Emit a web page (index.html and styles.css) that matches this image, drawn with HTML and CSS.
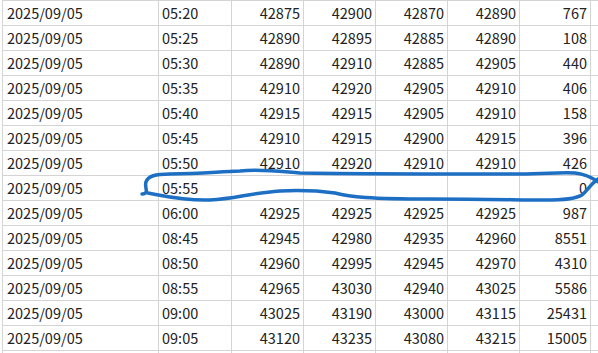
FILE: index.html
```html
<!DOCTYPE html>
<html lang="ja">
  <head>
    <meta charset="UTF-8" />
    <meta name="viewport" content="width=device-width, initial-scale=1.0" />
    <title>5分足データ</title>
    <link rel="stylesheet" href="styles.css">
  </head>
  <body>
    <div class="page">
      <div class="sheet">
        <div class="row"><div class="cell">2025/09/05</div><div class="cell">05:20</div><div class="cell num">42875</div><div class="cell num">42900</div><div class="cell num">42870</div><div class="cell num">42890</div><div class="cell num">767</div><div class="cell"></div></div>
        <div class="row"><div class="cell">2025/09/05</div><div class="cell">05:25</div><div class="cell num">42890</div><div class="cell num">42895</div><div class="cell num">42885</div><div class="cell num">42890</div><div class="cell num">108</div><div class="cell"></div></div>
        <div class="row"><div class="cell">2025/09/05</div><div class="cell">05:30</div><div class="cell num">42890</div><div class="cell num">42910</div><div class="cell num">42885</div><div class="cell num">42905</div><div class="cell num">440</div><div class="cell"></div></div>
        <div class="row"><div class="cell">2025/09/05</div><div class="cell">05:35</div><div class="cell num">42910</div><div class="cell num">42920</div><div class="cell num">42905</div><div class="cell num">42910</div><div class="cell num">406</div><div class="cell"></div></div>
        <div class="row"><div class="cell">2025/09/05</div><div class="cell">05:40</div><div class="cell num">42915</div><div class="cell num">42915</div><div class="cell num">42905</div><div class="cell num">42910</div><div class="cell num">158</div><div class="cell"></div></div>
        <div class="row"><div class="cell">2025/09/05</div><div class="cell">05:45</div><div class="cell num">42910</div><div class="cell num">42915</div><div class="cell num">42900</div><div class="cell num">42915</div><div class="cell num">396</div><div class="cell"></div></div>
        <div class="row"><div class="cell">2025/09/05</div><div class="cell">05:50</div><div class="cell num">42910</div><div class="cell num">42920</div><div class="cell num">42910</div><div class="cell num">42910</div><div class="cell num">426</div><div class="cell"></div></div>
        <div class="row"><div class="cell">2025/09/05</div><div class="cell">05:55</div><div class="cell num"></div><div class="cell num"></div><div class="cell num"></div><div class="cell num"></div><div class="cell num">0</div><div class="cell"></div></div>
        <div class="row"><div class="cell">2025/09/05</div><div class="cell">06:00</div><div class="cell num">42925</div><div class="cell num">42925</div><div class="cell num">42925</div><div class="cell num">42925</div><div class="cell num">987</div><div class="cell"></div></div>
        <div class="row"><div class="cell">2025/09/05</div><div class="cell">08:45</div><div class="cell num">42945</div><div class="cell num">42980</div><div class="cell num">42935</div><div class="cell num">42960</div><div class="cell num">8551</div><div class="cell"></div></div>
        <div class="row"><div class="cell">2025/09/05</div><div class="cell">08:50</div><div class="cell num">42960</div><div class="cell num">42995</div><div class="cell num">42945</div><div class="cell num">42970</div><div class="cell num">4310</div><div class="cell"></div></div>
        <div class="row"><div class="cell">2025/09/05</div><div class="cell">08:55</div><div class="cell num">42965</div><div class="cell num">43030</div><div class="cell num">42940</div><div class="cell num">43025</div><div class="cell num">5586</div><div class="cell"></div></div>
        <div class="row"><div class="cell">2025/09/05</div><div class="cell">09:00</div><div class="cell num">43025</div><div class="cell num">43190</div><div class="cell num">43000</div><div class="cell num">43115</div><div class="cell num">25431</div><div class="cell"></div></div>
        <div class="row"><div class="cell">2025/09/05</div><div class="cell">09:05</div><div class="cell num">43120</div><div class="cell num">43235</div><div class="cell num">43080</div><div class="cell num">43215</div><div class="cell num">15005</div><div class="cell"></div></div>
        <div class="row"><div class="cell"></div><div class="cell"></div><div class="cell"></div><div class="cell"></div><div class="cell"></div><div class="cell"></div><div class="cell"></div><div class="cell"></div></div>
      </div>

      <!-- hand-drawn marker around the empty 05:55 row -->
      <svg class="ink" width="598" height="353" viewBox="0 0 598 353">
        <path d="M142,194 C150,194 144,187 146,182 C148,176 155,174 170,174 C200,174 215,172 240,171 C260,169 275,171 300,173 C360,174 440,174 520,174 C545,174 560,172 575,173 C585,174 593,178 600,183" />
        <path d="M148,193 C165,196 185,201 210,200 C235,199 250,193 280,191 C300,190 320,191 335,193 C350,197 370,199 430,199 C490,199 520,200 545,200 C565,200 575,199 582,195 C588,190 592,182 600,178" />
      </svg>
    </div>
  </body>
</html>
```

FILE: styles.css
```css
body {
  margin: 0;
  background-color: #fff;
  font-family: "Noto Sans CJK JP", "Liberation Sans", sans-serif;
  font-size: 14.5px;
  color: #222;
  overflow: hidden;
}
.page {
  position: relative;
  width: 598px;
  height: 353px;
  overflow: hidden;
}
.sheet {
  margin-left: 2px;
  width: 640px;
  border-left: 1px solid #d4d4d4;
  border-top: 1px solid #d4d4d4;
}
.row {
  display: grid;
  grid-template-columns: 156px 73px 72px 72px 72px 72px 71px 1fr;
  height: 25px;
}
.cell {
  box-sizing: border-box;
  height: 25px;
  padding: 0 3px;
  border-right: 1px solid #d4d4d4;
  border-bottom: 1px solid #d4d4d4;
  line-height: 24px;
  white-space: nowrap;
  overflow: hidden;
}
.cell:first-child {
  padding-left: 4px;
}
.num {
  text-align: right;
}
.ink {
  position: absolute;
  top: 0;
  left: 0;
}
.ink path {
  fill: none;
  stroke: #1d6fc4;
  stroke-width: 3.5;
  stroke-linecap: round;
  stroke-linejoin: round;
}
```
